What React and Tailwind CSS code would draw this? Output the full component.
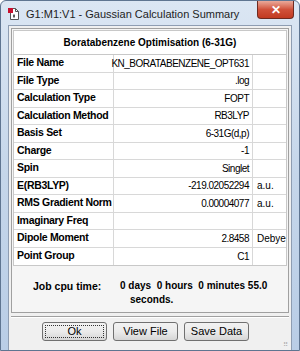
import React from 'react';

const rows = [
  ['File Name', 'KN_BORATABENZENE_OPT631', ''],
  ['File Type', '.log', ''],
  ['Calculation Type', 'FOPT', ''],
  ['Calculation Method', 'RB3LYP', ''],
  ['Basis Set', '6-31G(d,p)', ''],
  ['Charge', '-1', ''],
  ['Spin', 'Singlet', ''],
  ['E(RB3LYP)', '-219.02052294', 'a.u.'],
  ['RMS Gradient Norm', '0.00004077', 'a.u.'],
  ['Imaginary Freq', '', ''],
  ['Dipole Moment', '2.8458', 'Debye'],
  ['Point Group', 'C1', ''],
];

const font = { fontFamily: '"Liberation Sans", Arial, sans-serif' };

const AppIcon = () => (
  <svg width="12" height="14" viewBox="0 0 12 14">
    <path d="M2.5 1.5h5l3 3v8h-8z" fill="#fff" stroke="#555" />
    <path d="M7.5 1.5v3h3" fill="none" stroke="#555" />
    <rect x="0" y="1" width="5" height="5" fill="#c8102e" />
    <path d="M5 8l2 2m-2 0l2-2M6 7v4" stroke="#444" strokeWidth="0.8" />
  </svg>
);

const Btn = ({ children, focus }) => (
  <button className="w-[65px] h-[19px] rounded-[3px] border border-[#707070] bg-gradient-to-b from-[#f2f2f2] via-[#ebebeb] to-[#d6d6d6] text-[11px] text-black relative">
    {focus && <span className="absolute inset-[2px] border border-dotted border-[#333]" />}
    {children}
  </button>
);

export default function App() {
  return (
    <div
      className="w-[300px] h-[351px] bg-gradient-to-b from-[#dbe6f3] via-[#c5d6ea] to-[#b9cde6] border border-[#5f7591] rounded-t-[6px] flex flex-col overflow-hidden"
      style={font}
    >
      {/* title bar */}
      <div className="h-[24px] flex items-start shrink-0">
        <div className="flex items-center gap-[6px] pl-[7px] pt-[5px] flex-1 min-w-0">
          <AppIcon />
          <span className="text-[11px] text-[#1e1e1e] whitespace-nowrap">
            G1:M1:V1 - Gaussian Calculation Summary
          </span>
        </div>
        <div className="w-[37px] h-[18px] mr-[5px] shrink-0 rounded-b-[4px] border border-[#6e2a20] border-t-0 bg-gradient-to-b from-[#e9a99a] via-[#d0513a] to-[#c23a21] flex items-center justify-center text-white font-bold text-[12px]">
          ✕
        </div>
      </div>

      {/* client area */}
      <div className="mx-[7px] mb-[6px] flex-1 bg-[#f0f0f0] border border-[#8e9db2] flex flex-col">
        <div className="mx-[2px] mt-[2px] h-[285px] border border-[#a0a0a0] bg-[#f5f5f5] flex flex-col">
          <div className="mx-[1px] mt-[1px] bg-white border border-[#c8c8c8]">
            <div className="h-[24px] flex items-center justify-center font-bold text-[10px] text-black border-b border-[#c8c8c8]">
              Boratabenzene Optimisation (6-31G)
            </div>
            {rows.map(([label, value, unit], i) => (
              <div key={i} className="h-[17.5px] flex text-[10px] text-black border-b border-[#d8d8d8] last:border-b-0">
                <div className="w-[100px] pl-[3px] font-bold text-[10.5px] border-r border-[#d8d8d8] flex items-center whitespace-nowrap tracking-[-0.3px]">{label}</div>
                <div className="w-[139px] pr-[3px] border-r border-[#d8d8d8] flex items-center justify-end whitespace-nowrap tracking-[-0.5px]">{value}</div>
                <div className="flex-1 pl-[4px] flex items-center whitespace-nowrap">{unit}</div>
              </div>
            ))}
          </div>
          <div className="flex pl-[21px] pt-[13px] text-[10.5px] font-bold text-black leading-[14px]">
            <div className="w-[87px]">Job cpu time:</div>
            <div className="whitespace-nowrap text-[10px]">
              <div>0 days&nbsp; 0 hours&nbsp; 0 minutes 55.0</div>
              <div className="pl-[10px]">seconds.</div>
            </div>
          </div>
        </div>
        <div className="mx-[2px] mt-[3px] border-t border-[#a0a0a0] border-b border-b-white h-[2px]" />
        <div className="flex gap-[6px] pl-[33px] pt-[4px]">
          <Btn focus>Ok</Btn>
          <Btn>View File</Btn>
          <Btn>Save Data</Btn>
        </div>
        <div className="flex-1 flex items-end justify-end pr-[3px] pb-[2px]">
          <span className="text-[7px] text-[#b0b0b0] leading-none">⠿</span>
        </div>
      </div>
    </div>
  );
}
